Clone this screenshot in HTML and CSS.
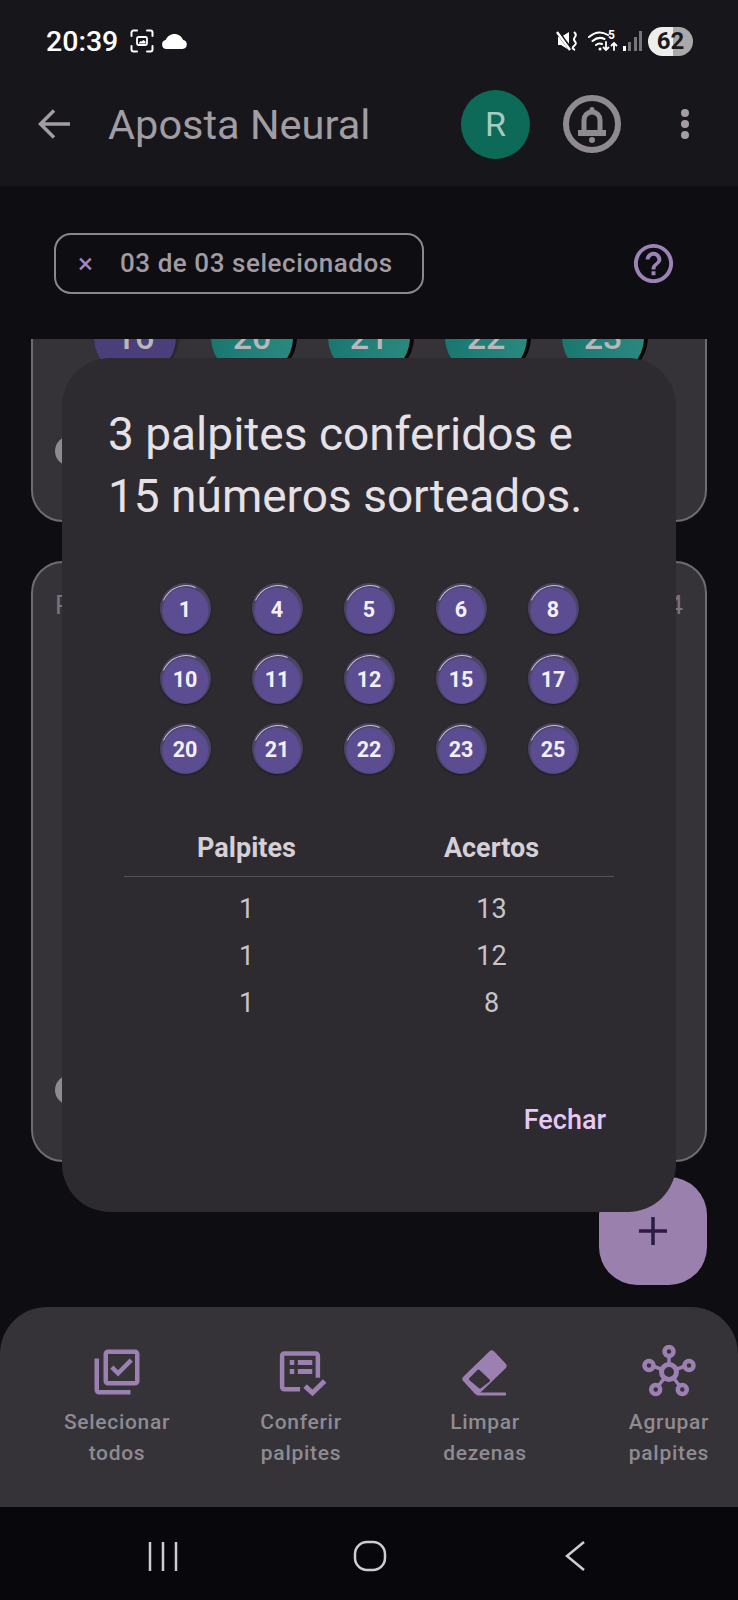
FILE: index.html
```html
<!DOCTYPE html>
<html lang="pt-BR">

<head>
  <meta charset="UTF-8">
  <meta name="viewport" content="width=device-width, initial-scale=1.0">
  <title>Aposta Neural</title>
  <link rel="stylesheet" href="styles.css">
</head>

<body>
  <div class="app">
    <header class="topbar">
      <div class="status">
        <span class="clock">20:39</span>
        <svg class="st-capture" width="24" height="24" viewBox="0 0 24 24" fill="none" stroke="#fff" stroke-width="2" stroke-linecap="round">
          <path d="M1.5 7V3.5a2 2 0 0 1 2-2H7M17 1.500h3.500a2 2 0 0 1 2 2V7M22.500 17v3.500a2 2 0 0 1-2 2H17M7 22.500H3.500a2 2 0 0 1-2-2V17" />
          <rect x="7" y="8" width="10" height="8" rx="1.500" stroke-width="1.800" />
          <path d="M8.500 14.500h7v-2l-2-1.500-2 1.500-1-.6z" fill="#fff" stroke="none" />
        </svg>
        <svg class="st-cloud" width="25" height="15" viewBox="0 0 25 15">
          <path d="M4.500 15a4.500 4.500 0 0 1-.8-8.900C5 2.500 8.500 0 12.500 0s7.300 2.500 8.700 6.100A4.500 4.500 0 0 1 20.500 15z" fill="#fff" />
        </svg>
        <div class="status-right">
          <svg width="22" height="22" viewBox="0 0 22 22">
            <path d="M2 7h3l8-5v18l-8-5H2z" fill="#fff" />
            <path d="M1 1l14 19" stroke="#17161b" stroke-width="4" />
            <path d="M1 2l13 18" stroke="#fff" stroke-width="2.400" />
            <path d="M18 2q3 2.500 1 5t0 4.500-1 4.500 1 4" fill="none" stroke="#fff" stroke-width="2" />
          </svg>
          <svg class="st-wifi" width="30" height="24" viewBox="0 0 30 24" fill="none" stroke="#fff" stroke-linecap="round">
            <path d="M1 8q9-8 19-2" stroke-width="2" />
            <path d="M4.500 12q6-5 12-2" stroke-width="2" />
            <path d="M8 16q3-2.500 6-1" stroke-width="2" />
            <circle cx="12" cy="20" r="1.500" fill="#fff" stroke="none" />
            <path d="M18 13v8m-2.500-2.500l2.500 2.500 2.500-2.500M26 21v-7m-2.500 2.500l2.500-2.500 2.500 2.500" stroke-width="1.800" />
            <text x="20" y="10" class="wifi-five">5</text>
          </svg>
          <div class="signal">
            <i class="on"></i><i></i><i></i><i></i>
          </div>
          <div class="battery">62</div>
        </div>
      </div>
      <div class="toolbar">
        <svg class="back" width="32" height="30" viewBox="0 0 32 30" fill="none" stroke="#a29da3" stroke-width="3.500">
          <path d="M32 15H3M16 1.500L2.500 15 16 28.500" />
        </svg>
        <h1 class="app-title">Aposta Neural</h1>
        <div class="avatar">R</div>
        <svg class="bell" width="58" height="58" viewBox="0 0 58 58">
          <circle cx="29" cy="29" r="26" fill="none" stroke="#8e8a90" stroke-width="6" />
          <path d="M21 36V25a8 8 0 0 1 16 0v11" fill="none" stroke="#8e8a90" stroke-width="5" />
          <rect x="26.500" y="12" width="5" height="6" rx="2.500" fill="#8e8a90" />
          <rect x="15" y="35" width="28" height="6" fill="#8e8a90" />
          <circle cx="29" cy="45" r="3" fill="#8e8a90" />
        </svg>
        <div class="dots"><i></i><i></i><i></i></div>
      </div>
    </header>

    <div class="filter-row">
      <div class="chip"><span class="chip-x">×</span>03 de 03 selecionados</div>
      <svg class="help" width="47" height="47" viewBox="0 0 24 24" fill="#9c82b6">
        <path d="M11 18h2v-2h-2v2zm1-16C6.480 2 2 6.480 2 12s4.480 10 10 10 10-4.480 10-10S17.520 2 12 2zm0 18c-4.410 0-8-3.590-8-8s3.590-8 8-8 8 3.590 8 8-3.590 8-8 8zm0-14c-2.210 0-4 1.790-4 4h2c0-1.100.9-2 2-2s2 .9 2 2c0 2-3 1.750-3 5h2c0-2.250 3-2.500 3-5 0-2.210-1.790-4-4-4z" />
      </svg>
    </div>

    <main class="list">
      <section class="card card-first">
        <div class="card-balls">
          <div class="big-ball purple">16</div>
          <div class="big-ball teal">20</div>
          <div class="big-ball teal">21</div>
          <div class="big-ball teal">22</div>
          <div class="big-ball teal">23</div>
        </div>
        <div class="card-toggle"></div>
      </section>
      <section class="card card-second">
        <div class="card-head"><span>Palpite</span><span>04</span></div>
        <div class="card-toggle"></div>
      </section>
    </main>

    <nav class="actions">
      <div class="action">
        <svg width="54" height="54" viewBox="0 0 24 24" fill="#9c80b2">
          <path d="M20 4v12H8V4h12m0-2H8C6.900 2 6 2.900 6 4v12c0 1.100.9 2 2 2h12c1.100 0 2-.9 2-2V4c0-1.100-.9-2-2-2zm-7.530 12L9 10.500l1.400-1.410 2.070 2.080L17.600 6 19 7.410 12.470 14zM4 20V6H2v14c0 1.100.9 2 2 2h14v-2H4z" />
        </svg>
        <span>Selecionar<br>todos</span>
      </div>
      <div class="action">
        <svg width="54" height="54" viewBox="0 0 24 24" fill="none" stroke="#9c80b2" stroke-width="2">
          <path d="M11.600 19.700H4.600a1 1 0 0 1-1-1V4.800a1 1 0 0 1 1-1h13.900a1 1 0 0 1 1 1v9.700" />
          <path d="M10.600 7.800H17M10.600 11.800H17" stroke-width="2.200" />
          <path d="M7 7.800h2M7 11.800h2" stroke-width="2.200" />
          <path d="M13.800 18.300l3.300 3 5.400-5.300" stroke-width="2.200" />
        </svg>
        <span>Conferir<br>palpites</span>
      </div>
      <div class="action">
        <svg width="54" height="54" viewBox="0 0 54 54">
          <path d="M33.700 9L45 21 19 46 8 34z" fill="#9c80b2" stroke="#9c80b2" stroke-width="7" stroke-linejoin="round" />
          <path d="M20.500 26L30.500 35.500 22 42 12.500 34z" fill="#353238" stroke="#353238" stroke-width="3" stroke-linejoin="round" />
          <path d="M19 49h29" stroke="#9c80b2" stroke-width="3" />
        </svg>
        <span>Limpar<br>dezenas</span>
      </div>
      <div class="action">
        <svg width="54" height="54" viewBox="0 0 54 54" fill="none" stroke="#9c80b2" stroke-width="3.500">
          <path d="M27 27L27 8M27 27L8 20M27 27L46 20M27 27L14 44M27 27L40 44" />
          <circle cx="27" cy="27" r="7.500" fill="#353238" stroke-width="5" />
          <circle cx="27" cy="6.500" r="4.500" fill="#353238" stroke-width="4.500" />
          <circle cx="7" cy="20.500" r="4.500" fill="#353238" stroke-width="4.500" />
          <circle cx="47" cy="20.500" r="4.500" fill="#353238" stroke-width="4.500" />
          <circle cx="13.700" cy="44.500" r="4.500" fill="#353238" stroke-width="4.500" />
          <circle cx="40.300" cy="44.500" r="4.500" fill="#353238" stroke-width="4.500" />
        </svg>
        <span>Agrupar<br>palpites</span>
      </div>
    </nav>

    <div class="navbar">
      <svg width="32" height="32" viewBox="0 0 32 32" stroke="#cfcdd0" stroke-width="2.500">
        <path d="M3 2v29M16 2v29M29 2v29" />
      </svg>
      <svg width="34" height="32" viewBox="0 0 34 32" fill="none" stroke="#cfcdd0" stroke-width="2.500">
        <rect x="2" y="2" width="30" height="28" rx="12" />
      </svg>
      <svg class="nav-back" width="22" height="32" viewBox="0 0 22 32" fill="none" stroke="#cfcdd0" stroke-width="2.500">
        <path d="M20 2L3 16l17 14" />
      </svg>
    </div>

    <button class="fab">
      <svg width="28" height="28" viewBox="0 0 28 28" stroke="#2e1a47" stroke-width="3.500">
        <path d="M14 0v28M0 14h28" />
      </svg>
    </button>

    <div class="dialog">
      <h2 class="dialog-title">3 palpites conferidos e<br>15 números sorteados.</h2>
      <div class="balls">
        <div class="ball-cell"><div class="ball">1</div></div>
        <div class="ball-cell"><div class="ball">4</div></div>
        <div class="ball-cell"><div class="ball">5</div></div>
        <div class="ball-cell"><div class="ball">6</div></div>
        <div class="ball-cell"><div class="ball">8</div></div>
        <div class="ball-cell"><div class="ball">10</div></div>
        <div class="ball-cell"><div class="ball">11</div></div>
        <div class="ball-cell"><div class="ball">12</div></div>
        <div class="ball-cell"><div class="ball">15</div></div>
        <div class="ball-cell"><div class="ball">17</div></div>
        <div class="ball-cell"><div class="ball">20</div></div>
        <div class="ball-cell"><div class="ball">21</div></div>
        <div class="ball-cell"><div class="ball">22</div></div>
        <div class="ball-cell"><div class="ball">23</div></div>
        <div class="ball-cell"><div class="ball">25</div></div>
      </div>
      <div class="results">
        <div class="results-head">Palpites</div>
        <div class="results-head">Acertos</div>
        <div>1</div>
        <div>13</div>
        <div>1</div>
        <div>12</div>
        <div>1</div>
        <div>8</div>
      </div>
      <div class="dialog-actions">
        <span class="close-btn">Fechar</span>
      </div>
    </div>
  </div>
</body>

</html>
```

FILE: styles.css
```css
* {
  box-sizing: border-box;
}

body {
  margin: 0;
  background-color: #0e0d12;
  font-family: Roboto, sans-serif;
}

.app {
  position: relative;
  display: flex;
  flex-direction: column;
  width: 738px;
  height: 1600px;
  overflow: hidden;
  background-color: #0e0d12;
}

/* status bar and toolbar */
.topbar {
  height: 186px;
  background-color: #17161b;
}

.status {
  display: flex;
  align-items: center;
  height: 82px;
  padding: 0 45px 0 46px;
  color: #fff;
}

.clock {
  width: 84px;
  font-size: 28.500px;
  font-weight: 500;
}

.st-cloud {
  margin-left: 8px;
}

.status-right {
  display: flex;
  align-items: center;
  margin-left: auto;
}

.st-wifi {
  margin-left: 10px;
}

.wifi-five {
  font-family: Roboto, sans-serif;
  font-size: 12px;
  font-weight: 700;
  fill: #fff;
  stroke: none;
}

.signal {
  display: flex;
  align-items: flex-end;
  gap: 2.500px;
  height: 20px;
  margin-left: 5px;
}

.signal i {
  width: 3px;
  background-color: #77757a;
}

.signal i:nth-child(1) {
  height: 5px;
}

.signal i:nth-child(2) {
  height: 9px;
}

.signal i:nth-child(3) {
  height: 14px;
}

.signal i:nth-child(4) {
  height: 20px;
}

.signal i.on {
  background-color: #fff;
}

.battery {
  width: 45px;
  height: 29px;
  margin-left: 6px;
  border-radius: 15px;
  background: linear-gradient(90deg, #eeeeee 56%, #a9a9a9 56%);
  color: #1b1b1d;
  font-size: 24px;
  font-weight: 700;
  line-height: 29px;
  text-align: center;
}

.toolbar {
  display: flex;
  align-items: center;
  height: 84px;
  padding-left: 38px;
}

.app-title {
  width: 353px;
  margin: 0 0 0 38px;
  color: #a29da3;
  font-size: 41.500px;
  font-weight: 400;
}

.avatar {
  width: 69px;
  height: 69px;
  border-radius: 50%;
  background-color: #0d6a59;
  color: #a7cbc1;
  font-size: 34px;
  line-height: 69px;
  text-align: center;
}

.bell {
  margin-left: 33px;
}

.dots {
  display: flex;
  flex-direction: column;
  gap: 3px;
  margin-left: 60px;
}

.dots i {
  width: 8px;
  height: 8px;
  border-radius: 50%;
  background-color: #a29da3;
}

/* filter chip */
.filter-row {
  display: flex;
  align-items: center;
  height: 153px;
  padding: 1px 61px 0 54px;
}

.chip {
  display: flex;
  align-items: center;
  width: 370px;
  height: 61px;
  padding-left: 22px;
  border: 2px solid #8b878c;
  border-radius: 17px;
  color: #a19ca3;
  font-size: 26px;
  font-weight: 500;
  letter-spacing: 0.550px;
}

.chip-x {
  width: 42px;
  color: #a286bd;
  font-size: 28px;
  font-weight: 400;
}

.help {
  margin-left: auto;
}

/* cards behind the dialog */
.list {
  flex: 1;
  min-height: 0;
  padding: 0 31px;
  overflow: hidden;
}

.card {
  display: flex;
  flex-direction: column;
  justify-content: space-between;
  width: 676px;
  padding: 0 22px;
  border: 2px solid #6f6c71;
  border-radius: 32px;
  background-color: #353238;
}

.card-first {
  height: 300px;
  margin-top: -117px;
  margin-bottom: 39px;
  padding-top: 72px;
  padding-bottom: 54px;
}

.card-second {
  height: 601px;
  padding-top: 27px;
  padding-bottom: 55px;
}

.card-balls {
  display: flex;
  gap: 35px;
  padding-left: 39px;
}

.big-ball {
  flex: none;
  width: 82px;
  height: 82px;
  border-radius: 50%;
  box-shadow: 4px 0 0 #050506;
  color: #b9b7b9;
  font-size: 34px;
  font-weight: 500;
  line-height: 82px;
  text-align: center;
}

.big-ball.purple {
  background-color: #4a3f7a;
  box-shadow: 3px 0 0 #2a2733;
}

.big-ball.teal {
  background: linear-gradient(100deg, #17756d, #2a8a80);
}

.card-head {
  display: flex;
  justify-content: space-between;
  color: #77747a;
  font-size: 26px;
}

.card-toggle {
  width: 30px;
  height: 30px;
  border-radius: 50%;
  background-color: #8e8b8f;
}

/* bottom actions */
.actions {
  display: flex;
  flex: none;
  height: 200px;
  padding: 38px 0 0 25px;
  border-radius: 47px 47px 0 0;
  overflow: hidden;
  background-color: #353238;
}

.action {
  display: flex;
  flex: none;
  flex-direction: column;
  align-items: center;
  gap: 8px;
  width: 184px;
  color: #8f8b90;
  font-size: 21px;
  font-weight: 500;
  letter-spacing: 0.700px;
  line-height: 31px;
  text-align: center;
}

.navbar {
  display: grid;
  flex: none;
  grid-template-columns: repeat(3, 207px);
  justify-items: center;
  align-items: center;
  height: 93px;
  padding: 4px 0 0 59px;
  background-color: #08070b;
}

.nav-back {
  margin-right: 3px;
}

.fab {
  position: absolute;
  top: 1177px;
  left: 599px;
  display: flex;
  align-items: center;
  justify-content: center;
  width: 108px;
  height: 108px;
  border: none;
  border-radius: 38px;
  background-color: #9a80ad;
}

/* dialog */
.dialog {
  position: absolute;
  top: 358px;
  left: 62px;
  width: 614px;
  height: 854px;
  padding: 45px 62px 0;
  border-radius: 48px;
  background-color: #2d2b30;
}

.dialog-title {
  margin: 0 -20px 0 -16px;
  color: #e6e1e6;
  font-size: 46px;
  font-weight: 400;
  line-height: 62px;
}

.balls {
  display: grid;
  grid-template-columns: repeat(5, 92px);
  grid-auto-rows: 70px;
  justify-content: center;
  margin-top: 46px;
}

.ball-cell {
  display: flex;
  align-items: center;
  justify-content: center;
}

.ball {
  position: relative;
  width: 51px;
  height: 51px;
  border-radius: 50%;
  background: radial-gradient(circle at 50% 54%, #5c4c92 0 22px, #4a4362 24px);
  box-shadow: 0 1px 2px #1d1b22;
  color: #f3f0f5;
  font-size: 21.500px;
  font-weight: 700;
  line-height: 53px;
  text-align: center;
}

/* brilho do topo da bola */
.ball::before {
  content: "";
  position: absolute;
  top: 2px;
  left: 1px;
  width: 48px;
  height: 48px;
  border: 1.500px solid transparent;
  border-top-color: #c9c3da;
  border-radius: 50%;
  transform: rotate(-22deg);
}

.results {
  display: grid;
  grid-template-columns: 1fr 1fr;
  grid-template-rows: 60px repeat(3, 47px);
  align-items: center;
  margin-top: 42px;
  color: #c8c3c9;
  font-size: 27px;
  text-align: center;
}

.results-head {
  align-self: start;
  height: 52px;
  border-bottom: 1px solid #55525a;
  color: #d5cfd7;
  font-size: 27px;
  font-weight: 700;
  line-height: 47px;
}

.dialog-actions {
  display: flex;
  justify-content: flex-end;
  margin-top: 78px;
  padding-right: 8px;
}

.close-btn {
  color: #e8c8f5;
  font-size: 27px;
  font-weight: 500;
}
```
